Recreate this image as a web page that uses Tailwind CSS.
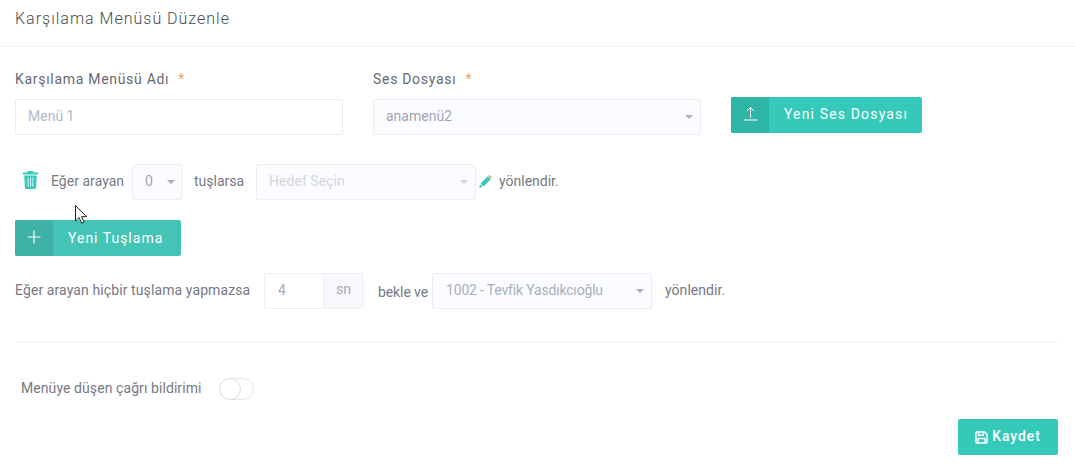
<!DOCTYPE html>
<html lang="tr">
<head>
<meta charset="utf-8">
<script src="https://cdn.jsdelivr.net/npm/@tailwindcss/browser@4"></script>
</head>
<body class="bg-white">
<div class="relative w-[1075px] h-[466px] overflow-hidden bg-white font-['Roboto',sans-serif] text-[#767985] text-[14px]">
  <header class="h-[47px] border-b border-[#f2f3f6] px-[15px] pb-[9px] flex items-center text-[16px] tracking-[1px] font-light text-[#464c55]">Karşılama Menüsü Düzenle</header>

  <section class="flex px-[15px] pt-[22px]">
    <div class="w-[328px]">
      <label class="flex h-[20px] items-center text-[14px] tracking-[0.7px] text-[#666973]">Karşılama Menüsü Adı<span class="ml-[9px] text-[#e0a670]">*</span></label>
      <div class="mt-[10px] h-[36px] border border-[#ebedf2] rounded-[2px] flex items-center px-[12px] pb-[2px] text-[#b4b8cb] bg-white">Menü 1</div>
    </div>
    <div class="w-[328px] ml-[30px]">
      <label class="flex h-[20px] items-center text-[14px] tracking-[0.7px] text-[#666973]">Ses Dosyası<span class="ml-[9px] text-[#e0a670]">*</span></label>
      <div class="mt-[10px] h-[36px] border border-[#ebedf2] rounded-[2px] flex items-center justify-between pl-[12px] pr-[7px] text-[#a2a4b4] bg-[#fbfcff]"><span class="pb-[2px]">anamenü2</span><span class="w-0 h-0 border-x-[4px] border-x-transparent border-t-[4px] border-t-[#b0b2c4]"></span></div>
    </div>
    <button class="ml-[30px] mt-[28px] w-[191px] h-[36px] rounded-[2px] bg-[#34c9b8] text-white flex items-stretch overflow-hidden">
      <span class="w-[38px] bg-[#2fb5a6] flex items-center justify-center">
        <svg class="mb-[3px]" width="15" height="15" viewBox="0 0 15 15" fill="none" stroke="#fff" stroke-width="1"><path d="M7.5 11.5V1.5M4 5 7.5 1.5 11 5M0.5 14h14"/></svg>
      </span>
      <span class="flex-1 flex items-center justify-start pl-[15px] tracking-[1.15px] pb-[2px]">Yeni Ses Dosyası</span>
    </button>
  </section>

  <section class="flex items-center h-[36px] mt-[29px] pl-[23px]">
    <svg class="w-[15px] h-[18px] mr-[13px] mb-[4px]" viewBox="0 0 15 18" fill="#34c9b8"><path d="M5 0h5l1 1.6h4V3.4H0V1.6h4zM1.2 4.4h12.6l-.7 12.2c0 .8-.6 1.4-1.4 1.4H3.3c-.8 0-1.4-.6-1.4-1.4zM4.7 6.4v9.4h.8V6.4zm2.4 0v9.4h.8V6.4zm2.4 0v9.4h.8V6.4z" fill-rule="evenodd"/></svg>
    <span class="w-[81px] tracking-[0.03px] pb-[2px]">Eğer arayan</span>
    <div class="w-[50px] h-[36px] border border-[#ebedf2] rounded-[2px] flex items-center justify-between pl-[12px] pr-[6px] text-[#a2a4b4] bg-[#fbfcff]"><span class="pb-[2px]">0</span><span class="w-0 h-0 border-x-[4px] border-x-transparent border-t-[4px] border-t-[#a9abbe]"></span></div>
    <span class="ml-[12px] w-[62px] pb-[2px]">tuşlarsa</span>
    <div class="w-[220px] h-[36px] border border-[#ebedf2] rounded-[2px] flex items-center justify-between pl-[12px] pr-[7px] text-[#d4d6da] bg-[#fbfcff]"><span class="pb-[2px] tracking-[0.05px]">Hedef Seçin</span><span class="w-0 h-0 border-x-[4px] border-x-transparent border-t-[4px] border-t-[#d2d3dc]"></span></div>
    <svg class="w-[13px] h-[13px] ml-[3px] mr-[7px] mb-[2px]" viewBox="0 0 13 13"><path d="M0.3 12.7 1 9.3 3.7 12z" fill="#34c9b8"/><path d="M1.6 8.5 8.8 1.3l2.9 2.9-7.2 7.2z" fill="#34c9b8"/><path d="M9.5.6c.5-.5 1.1-.5 1.6 0l1.3 1.3c.5.5.5 1.1 0 1.6l-.3.3-2.9-2.9z" fill="#e59a6e"/></svg>
    <span class="pb-[2px]">yönlendir.</span>
  </section>

  <section class="px-[15px] mt-[20px]">
    <button class="w-[166px] h-[36px] rounded-[2px] bg-[#44c4b6] text-white flex items-stretch overflow-hidden">
      <span class="w-[38px] bg-[#3eb2a6] flex items-center justify-center pb-[2px]">
        <svg width="14" height="14" viewBox="0 0 14 14" stroke="#fff" stroke-width="1.2"><path d="M7 0.5v13M0.5 7h13"/></svg>
      </span>
      <span class="flex-1 flex items-center justify-start pl-[15px] tracking-[1px]">Yeni Tuşlama</span>
    </button>
  </section>

  <section class="flex items-center h-[36px] mt-[17px] pl-[15px]">
    <span class="w-[249px] tracking-[0.1px] pb-[2px]">Eğer arayan hiçbir tuşlama yapmazsa</span>
    <div class="flex w-[100px] h-[36px] border border-[#f0f1f5] rounded-[2px] -mt-[1px]">
      <span class="w-[58px] flex items-center pl-[13px] pb-[1px] text-[#a7abc3]">4</span>
      <span class="flex-1 flex items-center justify-center pb-[3px] bg-[#f7f8fb] border-l border-[#ebedf2] text-[#a7abc3]">sn</span>
    </div>
    <span class="ml-[14px] w-[54px] pt-[3px] tracking-[-0.1px]">bekle ve</span>
    <div class="w-[220px] h-[36px] border border-[#ebedf2] rounded-[2px] flex items-center justify-between pl-[13px] pr-[7px] text-[#abaebb] bg-[#fbfcff]"><span class="pb-[2px] tracking-[-0.18px]">1002 - Tevfik Yasdıkcıoğlu</span><span class="w-0 h-0 border-x-[4px] border-x-transparent border-t-[4px] border-t-[#a9abbe]"></span></div>
    <span class="ml-[13px] pb-[2px] tracking-[0.05px]">yönlendir.</span>
  </section>

  <hr class="mx-[15px] mt-[32px] w-[1043px] border-t border-[#f2f3f6]">

  <section class="flex items-center h-[22px] mt-[36px] pl-[21px]">
    <span class="w-[198px] tracking-[0.08px] pb-[1px]">Menüye düşen çağrı bildirimi</span>
    <span class="relative w-[35px] h-[22px] rounded-full border border-[#e6e7ec] bg-white">
      <span class="absolute left-[-1px] top-[-1px] w-[22px] h-[22px] rounded-full border border-[#dcdde2] bg-white"></span>
    </span>
  </section>

  <div class="flex justify-end pr-[17px] mt-[19px]">
    <button class="w-[100px] h-[36px] rounded-[2px] bg-[#34c9b8] text-white flex items-center justify-center gap-[4px] font-medium tracking-[0.9px]">
      <svg class="w-[13px] h-[13px]" viewBox="0 0 13 13" fill="none" stroke="#fff" stroke-width="1.4"><path d="M1 1.7c0-.4.3-.7.7-.7h8L12 3.3v8c0 .4-.3.7-.7.7H1.7c-.4 0-.7-.3-.7-.7z"/><path d="M3.5 1.2v3h5v-3M3 12V7.5h7V12"/></svg>
      <span class="pb-[1px]">Kaydet</span>
    </button>
  </div>

  <svg class="absolute left-[75px] top-[205px] w-[13px] h-[19px]" viewBox="0 0 13 19"><path d="M.5.5v15.5l3.6-3.4 2.6 5.6 2.4-1.1-2.5-5.4h5z" fill="#fff" stroke="#222" stroke-width="1"/></svg>
</div>
</body>
</html>
